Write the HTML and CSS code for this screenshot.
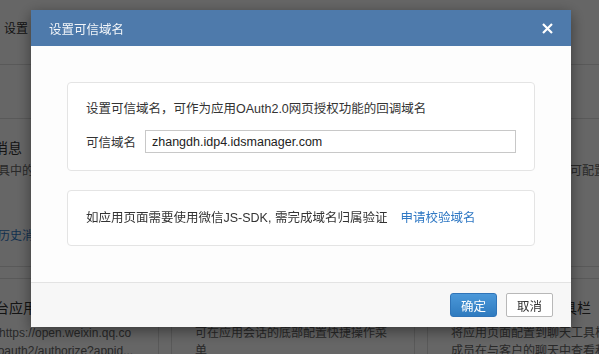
FILE: index.html
```html
<!DOCTYPE html>
<html lang="zh-CN">
<head>
<meta charset="UTF-8" />
<meta name="viewport" content="width=device-width, initial-scale=1.0"/>
<link rel="stylesheet" href="styles.css">
</head>
<body>

<!-- Página de fondo (detrás de la máscara) -->
<div class="page">
  <div class="topbar"><span class="topbar__crumb">设置</span></div>
  <div class="intro"></div>

  <div class="feature-row">
    <div class="feature">
      <h4 class="feature__title">接收应用消息</h4>
      <p class="feature__desc">可在聊天工具中的消息列表查看</p>
      <a href="#" class="feature__link">可点击查看历史消息</a>
    </div>
    <div class="feature">
      <h4 class="feature__title">应用会话</h4>
      <p class="feature__desc">成员可在应用会话中接收消息</p>
    </div>
    <div class="feature">
      <h4 class="feature__title">应用详情</h4>
      <p class="feature__desc">成员在应用的详情页中可配置菜单项</p>
    </div>
  </div>

  <div class="card-row">
    <div class="card">
      <h4 class="card__title">企业工作台应用</h4>
      <p class="card__line">应用主页：https://open.weixin.qq.co</p>
      <p class="card__line">m/connect/oauth2/authorize?appid...</p>
    </div>
    <div class="card">
      <h4 class="card__title">自定义菜单</h4>
      <p class="card__desc">可在应用会话的底部配置快捷操作菜单</p>
    </div>
    <div class="card">
      <h4 class="card__title">应用配置到聊天工具栏</h4>
      <p class="card__desc">将应用页面配置到聊天工具栏，方便成员在与客户的聊天中查看和使用</p>
    </div>
  </div>
</div>

<div class="mask"></div>

<!-- Diálogo -->
<div class="modal">
  <div class="modal__header">
    <span class="modal__title">设置可信域名</span>
    <button class="modal__close" aria-label="关闭">
      <svg width="11" height="11" viewBox="0 0 11 11">
        <path d="M1 1 L10 10 M10 1 L1 10" stroke="#fff" stroke-width="2.2" fill="none"/>
      </svg>
    </button>
  </div>

  <div class="modal__body">
    <div class="panel">
      <p class="panel__text">设置可信域名，可作为应用OAuth2.0网页授权功能的回调域名</p>
      <div class="field">
        <label class="field__label">可信域名</label>
        <input class="field__input" type="text" value="zhangdh.idp4.idsmanager.com">
      </div>
    </div>
    <div class="panel">
      <p class="panel__text">如应用页面需要使用微信JS-SDK, 需完成域名归属验证<a href="#" class="panel__link">申请校验域名</a></p>
    </div>
  </div>

  <div class="modal__footer">
    <button class="btn btn--primary">确定</button>
    <button class="btn">取消</button>
  </div>
</div>

</body>
</html>
```

FILE: styles.css
```css
:root {
  --text-color: #333;
  --muted-color: #666;
  --line-color: #dedede;
  --link-color: #2f78c4;
  --header-color: #4e7aab;
}

body {
  margin: 0;
  font-family: "Liberation Sans", "Noto Sans CJK SC", sans-serif;
  color: var(--text-color);
  background: #fff;
  overflow: hidden;
}

p, h4 {
  margin: 0;
}

/* Fondo */
.page {
  width: 599px;
  height: 354px;
  overflow: hidden;
}

.topbar {
  height: 65px;
  border-bottom: 1px solid var(--line-color);
  display: flex;
  align-items: center;
  padding-left: 4px;
  font-size: 12px;
  padding-bottom: 10px;
  box-sizing: border-box;
}

.intro {
  height: 53px;
  border-bottom: 1px solid var(--line-color);
}

.feature-row,
.card-row {
  display: grid;
  grid-template-columns: repeat(3, 244px);
  column-gap: 12px;
  margin-left: -85px;
}

.feature-row {
  height: 147px;
  border-bottom: 1px solid var(--line-color);
}

.feature {
  padding: 19px 23px 0;
}

.feature__title,
.card__title {
  font-size: 14px;
  font-weight: normal;
  line-height: 20px;
}

.feature__desc {
  margin-top: 4px;
  font-size: 12px;
  line-height: 18px;
  color: var(--muted-color);
}

.feature__link {
  display: block;
  margin-top: 47px;
  font-size: 12px;
  line-height: 18px;
  color: var(--link-color);
  text-decoration: none;
}

.card-row {
  margin-top: 11px;
}

.card {
  height: 120px;
  border: 1px solid var(--line-color);
  padding: 19px 23px 0;
}

.card__title {
  margin-bottom: 6px;
  white-space: nowrap;
}

.card__line {
  font-size: 12px;
  line-height: 18px;
  color: var(--muted-color);
  white-space: nowrap;
  overflow: hidden;
  text-overflow: ellipsis;
}

.card__desc {
  font-size: 12px;
  line-height: 18px;
  color: var(--muted-color);
}

/* Máscara */
.mask {
  position: fixed;
  inset: 0;
  background: rgba(0, 0, 0, 0.6);
}

/* Diálogo */
.modal {
  position: fixed;
  left: 31px;
  top: 10px;
  width: 540px;
  background: #fdfdfd;
  box-shadow: 0 4px 14px rgba(0, 0, 0, 0.45);
  font-size: 12.5px;
}

.modal__header {
  height: 36px;
  background: var(--header-color);
  display: flex;
  align-items: center;
  justify-content: space-between;
  padding: 0 18px;
}

.modal__title {
  color: #f2f5f9;
  font-size: 12.5px;
}

.modal__close {
  background: none;
  border: none;
  padding: 0;
  display: flex;
  cursor: pointer;
}

.modal__body {
  padding: 36px;
  display: flex;
  flex-direction: column;
  gap: 19px;
}

.panel {
  border: 1px solid #e4e4e4;
  border-radius: 4px;
  background: #fff;
  padding: 18px;
}

.panel:first-child {
  padding-top: 17px;
  padding-bottom: 17px;
}

.panel__text {
  line-height: 18px;
}

.panel__link {
  margin-left: 13px;
  color: var(--link-color);
  text-decoration: none;
}

.field {
  display: flex;
  align-items: center;
  gap: 9px;
  margin-top: 12px;
}

.field__input {
  flex: 1;
  height: 23px;
  box-sizing: border-box;
  border: 1px solid #c8c8c8;
  padding: 0 6px;
  font-family: inherit;
  font-size: 12.5px;
  color: #222;
  background: #fff;
}

.modal__footer {
  border-top: 1px solid #e3e3e3;
  background: #f7f7f7;
  padding: 10px 18px;
  display: flex;
  justify-content: flex-end;
  gap: 9px;
}

.btn {
  height: 24px;
  padding: 0 10px;
  font-family: inherit;
  font-size: 12.5px;
  color: var(--text-color);
  background: #fff;
  border: 1px solid #b8b8b8;
  border-radius: 2px;
  cursor: pointer;
}

.btn--primary {
  color: #fff;
  border-color: #2f74b8;
  background: linear-gradient(#4b98d9, #2f7bbf);
  border-radius: 3px;
}
```
